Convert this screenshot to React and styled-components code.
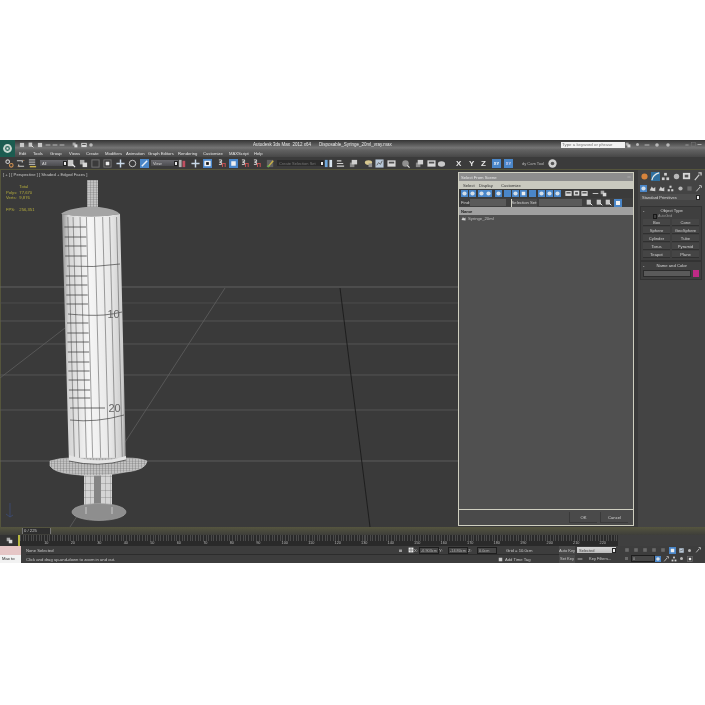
import React from 'react';
import styled, { createGlobalStyle } from 'styled-components';

const GlobalStyle = createGlobalStyle`
  html, body {
    margin: 0;
    background: #ffffff;
    font-family: "Liberation Sans", Arial, sans-serif;
  }
`;

const Frame = styled.div`
  margin-top: 140px;
  width: 705px;
  height: 423px;
  display: flex;
  flex-direction: column;
  overflow: hidden;
  background: #3f3f3f;
  filter: blur(0.4px);
`;

const Header = styled.div`
  height: 17px;
  flex: none;
  display: flex;
  background: linear-gradient(#353535 0, #757575 46%, #626262 58%, #474747 100%);
`;
const Logo = styled.div`
  width: 15px;
  flex: none;
  background: #1c5c50;
  display: flex;
  align-items: center;
  justify-content: center;
`;
const HeaderBody = styled.div`
  flex: 1;
  display: flex;
  flex-direction: column;
`;
const TitleRow = styled.div`
  height: 9px;
  display: flex;
  align-items: center;
  padding-left: 4px;
`;
const MenuRow = styled.div`
  height: 8px;
  display: flex;
  align-items: center;
  padding-left: 4px;
`;
const Slot = styled.div`
  width: ${(p) => p.$w}px;
  flex: none;
  display: flex;
  align-items: center;
  white-space: nowrap;
`;
const MenuItem = styled(Slot)`
  font-size: 4.2px;
  color: #e4e4e4;
`;
const TitleText = styled(Slot)`
  font-size: 4.5px;
  color: #e8e8e8;
`;
const SearchBox = styled.div`
  width: 64px;
  height: 6px;
  flex: none;
  background: #f2f2f2;
  color: #777777;
  font-size: 4.4px;
  line-height: 6px;
  padding-left: 1px;
  box-sizing: border-box;
`;

const Toolbar = styled.div`
  height: 13px;
  flex: none;
  display: flex;
  align-items: center;
  padding-left: 5px;
  background: #3b3b3b;
  border-bottom: 1px solid #55553c;
  box-sizing: border-box;
`;
const Combo = styled.div`
  width: ${(p) => p.$w}px;
  height: 6px;
  box-sizing: border-box;
  display: flex;
  align-items: center;
  justify-content: space-between;
  padding-left: 2px;
  font-size: 4px;
  white-space: nowrap;
  color: ${(p) => p.$text || '#d6d6d6'};
  background: ${(p) => p.$bg || 'linear-gradient(#6b6b70, #4c4c50)'};
`;
const ComboArrow = styled.span`
  width: 4px;
  height: 5px;
  flex: none;
  background: #e8e8e8;
  border: 1px solid #222222;
  box-sizing: border-box;
`;
const AxisKey = styled.span`
  font-size: 8px;
  font-weight: 700;
  color: #e8e8e8;
`;
const AxisPlane = styled.span`
  width: 9px;
  height: 9px;
  display: flex;
  align-items: center;
  justify-content: center;
  font-size: 4px;
  font-weight: 700;
  color: ${(p) => (p.$active ? '#ffffff' : '#d8d0f0')};
  background: #4a86c8;
`;
const ToolLabel = styled.span`
  font-size: 4px;
  color: #b8b8b8;
`;

const Workspace = styled.div`
  flex: 1;
  min-height: 0;
  display: flex;
`;
const Viewport = styled.div`
  position: relative;
  width: 638px;
  flex: none;
  background: #3a3a3a;
  box-shadow: inset 1px 0 0 #55553c;
`;
const Scene = styled.svg`
  display: block;
  width: 638px;
  height: 357px;
`;
const ViewLabel = styled.div`
  position: absolute;
  left: 3px;
  top: 2px;
  font-size: 4.2px;
  color: #c8c8c8;
`;
const Stats = styled.div`
  position: absolute;
  left: 6px;
  top: 14px;
  display: grid;
  grid-template-columns: 10px auto;
  column-gap: 1px;
  font-size: 4.2px;
  line-height: 5.5px;
  color: #b4ac3c;
`;
const StatGap = styled.div`
  grid-column: 1 / 3;
  height: 6px;
`;

const Dialog = styled.div`
  position: absolute;
  left: 458px;
  top: 2px;
  width: 176px;
  height: 354px;
  display: flex;
  flex-direction: column;
  box-sizing: border-box;
  border: 1px solid #cfcfc0;
  background: #4a4a4a;
`;
const DialogTitle = styled.div`
  height: 8px;
  flex: none;
  display: flex;
  align-items: center;
  justify-content: space-between;
  padding: 0 2px;
  font-size: 4.2px;
  color: #e8e8e8;
  background: #8d8d8d;
`;
const DialogMenu = styled.div`
  height: 8px;
  flex: none;
  display: flex;
  align-items: center;
  padding-left: 4px;
  font-size: 4.2px;
  color: #333333;
  background: #c9c9bf;
`;
const DialogTools = styled.div`
  height: 9px;
  flex: none;
  display: flex;
  align-items: center;
  padding-left: 2px;
  background: #3b3b3b;
`;
const FindRow = styled.div`
  height: 9px;
  flex: none;
  display: flex;
  align-items: center;
  padding-left: 2px;
  background: #3f3f3f;
  font-size: 4.2px;
  color: #d0d0d0;
`;
const FindInput = styled.div`
  width: ${(p) => p.$w}px;
  height: 7px;
  flex: none;
  background: #5a5a5a;
`;
const SetButton = styled.div`
  width: 26px;
  height: 8px;
  flex: none;
  margin: 0 2px 0 5px;
  display: flex;
  align-items: center;
  justify-content: center;
  white-space: nowrap;
  background: #4b4b4b;
  border-left: 1px solid #d4d4c8;
  box-sizing: border-box;
`;
const ListHeader = styled.div`
  height: 8px;
  flex: none;
  display: flex;
  align-items: center;
  padding-left: 2px;
  font-size: 4.2px;
  font-weight: 700;
  color: #222222;
  background: #a0a0a0;
`;
const ListBody = styled.div`
  flex: 1;
  background: #505050;
  padding: 1px 0 0 2px;
  border-bottom: 1px solid #cfcfc0;
`;
const ListRow = styled.div`
  display: flex;
  align-items: center;
  gap: 2px;
  height: 5px;
  font-size: 4.2px;
  color: #c0c0c0;
`;
const DialogFooter = styled.div`
  height: 15px;
  flex: none;
  display: flex;
  align-items: center;
  justify-content: flex-end;
  gap: 3px;
  padding-right: 5px;
  background: #4a4a4a;
`;
const FooterButton = styled.div`
  width: 27px;
  height: 10px;
  display: flex;
  align-items: center;
  justify-content: center;
  font-size: 4.2px;
  color: #d0d0d0;
  border-left: 1px solid #3a3a3a;
  border-bottom: 1px solid #3a3a3a;
`;

const CommandPanel = styled.div`
  flex: 1;
  display: flex;
  flex-direction: column;
  padding: 0 3px 0 2px;
  background: #444444;
  box-sizing: border-box;
`;
const PanelIcons = styled.div`
  height: 12px;
  display: flex;
  align-items: center;
  justify-content: space-between;
  flex: none;
`;
const Rollout = styled.div`
  margin-top: ${(p) => p.$top}px;
  flex: none;
  display: flex;
  flex-direction: column;
  padding: 1px 2px 2px;
  background: #3f3f3f;
  border: 1px solid #333333;
  box-sizing: border-box;
`;
const RolloutHead = styled.div`
  height: 5px;
  flex: none;
  display: flex;
  justify-content: space-between;
  font-size: 4.2px;
  line-height: 5px;
  color: #d4d4d4;
`;
const AutoGrid = styled.div`
  height: 6px;
  display: flex;
  align-items: center;
  padding-left: 10px;
  gap: 1px;
  font-size: 3.6px;
  color: #9a9a9a;
`;
const CheckBox = styled.span`
  width: 4px;
  height: 5px;
  border: 1px solid #181818;
  box-sizing: border-box;
`;
const ObjectGrid = styled.div`
  display: grid;
  grid-template-columns: 1fr 1fr;
  column-gap: 2px;
  row-gap: 1px;
`;
const ObjectButton = styled.div`
  height: 7px;
  box-sizing: border-box;
  display: flex;
  align-items: center;
  justify-content: center;
  font-size: 4.2px;
  color: #cccccc;
  background: #454545;
  border-bottom: 1px solid #303030;
`;
const NameRow = styled.div`
  display: flex;
  gap: 2px;
  margin-top: 2px;
`;
const NameInput = styled.div`
  flex: 1;
  height: 7px;
  background: #5a5a5a;
  border: 1px solid #2c2c2c;
  box-sizing: border-box;
`;
const Swatch = styled.div`
  width: 6px;
  height: 7px;
  background: #c02a86;
`;

const SliderBar = styled.div`
  height: 8px;
  flex: none;
  display: flex;
  align-items: center;
  padding-left: 3px;
  background: linear-gradient(#55553f, #3e3e3a);
  font-size: 4.2px;
  color: #c8c8c8;
`;
const SliderThumb = styled.div`
  width: 29px;
  height: 6px;
  margin-left: 19px;
  padding-left: 1px;
  line-height: 6px;
  background: #2f2f2f;
  border-right: 1px solid #777777;
  border-left: 1px solid #777777;
  box-sizing: border-box;
`;
const TrackRow = styled.div`
  height: 11px;
  flex: none;
  display: flex;
  background: #3f3f3f;
`;
const TrackKey = styled.div`
  width: 18px;
  flex: none;
  display: flex;
  align-items: center;
  justify-content: center;
  background: #333333;
`;
const TrackMark = styled.div`
  width: 2px;
  flex: none;
  background: #b8b840;
`;
const TrackScale = styled.div`
  width: 598px;
  flex: none;
  display: flex;
  padding-left: 13px;
  box-sizing: border-box;
  background:
    repeating-linear-gradient(90deg, #4a4a4a 0, #4a4a4a 1px, transparent 1px, transparent 2.65px) top / 100% 6px no-repeat,
    #2a2a2a;
`;
const TrackLabel = styled.div`
  width: 26.5px;
  flex: none;
  align-self: flex-end;
  text-align: center;
  font-size: 3.8px;
  line-height: 5px;
  color: #b4b4b4;
`;

const StatusBar = styled.div`
  height: 17px;
  flex: none;
  display: flex;
  background: #3d3d3d;
`;
const MiniListener = styled.div`
  width: 21px;
  flex: none;
  display: flex;
  flex-direction: column;
`;
const ListenerTop = styled.div`
  height: 9px;
  background: #e6c6c6;
`;
const ListenerBottom = styled.div`
  flex: 1;
  background: #f2f2f2;
  font-size: 4.2px;
  line-height: 8px;
  padding-left: 2px;
  color: #222222;
`;
const PromptArea = styled.div`
  width: 538px;
  flex: none;
  display: flex;
  flex-direction: column;
  padding-left: 5px;
  box-sizing: border-box;
`;
const PromptRow = styled.div`
  height: ${(p) => p.$h}px;
  display: flex;
  align-items: center;
  font-size: 4.2px;
  color: #c8c8c8;
  border-bottom: ${(p) => (p.$line ? '1px solid #2c2c2c' : 'none')};
  box-sizing: border-box;
`;
const CoordBox = styled.div`
  width: ${(p) => p.$w}px;
  height: 7px;
  flex: none;
  font-size: 3.8px;
  line-height: 6px;
  padding-left: 1px;
  color: #b0b0b0;
  background: #474747;
  border: 1px solid #1e1e1e;
  box-sizing: border-box;
`;
const AnimArea = styled.div`
  width: 60px;
  flex: none;
  display: flex;
  flex-direction: column;
`;
const AnimRow = styled.div`
  height: 9px;
  display: flex;
  align-items: center;
  font-size: 4px;
  color: #c8c8c8;
`;
const AnimButton = styled.div`
  width: 16px;
  height: 8px;
  flex: none;
  margin-right: 2px;
  display: flex;
  align-items: center;
  justify-content: center;
  white-space: nowrap;
  background: #4a4a4a;
`;
const NavArea = styled.div`
  flex: 1;
  display: flex;
  flex-direction: column;
  padding-left: 5px;
`;

const COLORS = {
  blue: '#4a86c8',
  yellow: '#c8b048',
  orange: '#d8843c',
};

const Icon = ({ kind, size = 8 }) => {
  const shapes = {
    link: (
      <>
        <circle cx="3" cy="3" r="2" fill="none" stroke="#c8c8c8" strokeWidth="1.2" />
        <circle cx="7" cy="7" r="2" fill="none" stroke="#d09050" strokeWidth="1.2" />
      </>
    ),
    unlink: (
      <>
        <path d="M1 2h6v2M9 8H3V6" fill="none" stroke="#c8c8c8" strokeWidth="1.2" />
        <path d="M2 8l1 1M8 1l1 1" stroke="#d09050" />
      </>
    ),
    layers: (
      <>
        <path d="M1 1h7M1 3.5h7M1 6h7" stroke="#a8a8a8" strokeWidth="1.4" />
        <path d="M2 8.5h7" stroke={COLORS.yellow} strokeWidth="1.6" />
      </>
    ),
    doc: (
      <>
        <rect x="1" y="1" width="6" height="7" fill="#c8c8c8" />
        <path d="M6 6l3 3" stroke="#eeeeee" strokeWidth="1.4" />
      </>
    ),
    docs: (
      <>
        <rect x="1" y="1" width="5" height="5" fill="#a8a8a8" />
        <rect x="4" y="4" width="5" height="5" fill="#d8d8d8" />
      </>
    ),
    rect: <rect x="1" y="1" width="8" height="8" fill="none" stroke="#777777" strokeWidth="1" />,
    win: (
      <>
        <rect x="1" y="1" width="8" height="8" fill="none" stroke="#777777" />
        <rect x="3" y="3" width="4" height="4" fill="#eeeeee" />
      </>
    ),
    move: <path d="M5 .5v9M.5 5h9" stroke="#c8d8e8" strokeWidth="1.6" />,
    rotate: <circle cx="5" cy="5" r="3.6" fill="none" stroke="#c8c8c8" strokeWidth="1.1" />,
    scale: (
      <>
        <rect width="10" height="10" fill={COLORS.blue} />
        <path d="M2 8l6-6" stroke="#e8f0f8" strokeWidth="1.6" />
      </>
    ),
    pivot: (
      <>
        <rect x="1" y="1" width="3" height="8" fill="#b0b0b0" />
        <rect x="5" y="2" width="3" height="7" fill="#c05060" />
      </>
    ),
    active: (
      <>
        <rect width="10" height="10" fill={COLORS.blue} />
        <rect x="2.5" y="2.5" width="5" height="5" fill="#f0f0f0" />
      </>
    ),
    play: (
      <>
        <rect width="10" height="10" fill={COLORS.blue} />
        <rect x="1.5" y="2" width="7" height="6" fill="#f0f0f0" />
        <rect x="3.5" y="3.5" width="3" height="3" fill="#111111" />
      </>
    ),
    solid: <rect width="10" height="10" fill={COLORS.blue} />,
    snap: (
      <>
        <path d="M1 1h3v2H2v1h2v2H1" fill="none" stroke="#e0e0e0" />
        <path d="M5 9V5h3v4" fill="none" stroke="#c05050" strokeWidth="1.2" />
      </>
    ),
    edit: (
      <>
        <rect x="1" y="1" width="7" height="8" fill="#606060" />
        <path d="M2 9l6-7" stroke={COLORS.yellow} strokeWidth="1.6" />
        <path d="M1 8h3" stroke="#58a858" strokeWidth="1.4" />
      </>
    ),
    mirror: (
      <>
        <rect x="1" y="1" width="3" height="8" fill="#6fa8dc" />
        <rect x="6" y="1" width="3" height="8" fill="#d8e4f0" />
      </>
    ),
    align: <path d="M1 2h5M1 5h7M1 8h8" stroke="#cfcfcf" strokeWidth="1.3" />,
    stack: (
      <>
        <rect x="1" y="4" width="5" height="5" fill="#888888" />
        <rect x="3" y="1" width="6" height="5" fill="#cfcfcf" />
      </>
    ),
    cloud: (
      <>
        <ellipse cx="5" cy="4" rx="4" ry="2.6" fill="#d8c890" />
        <rect x="5" y="5" width="4" height="4" fill="#909090" />
      </>
    ),
    grid: (
      <>
        <rect x="0.5" y="0.5" width="9" height="9" fill="#b8c8d8" />
        <path d="M2 7l2-3 2 2 2-4" stroke="#606060" fill="none" />
      </>
    ),
    panel: (
      <>
        <rect x="0.5" y="1.5" width="9" height="7" fill="#d8d8d8" />
        <rect x="2" y="3" width="6" height="2" fill="#505050" />
      </>
    ),
    render: (
      <>
        <circle cx="5" cy="5" r="3.6" fill="#909090" />
        <path d="M7 7l2.5 2.5" stroke="#e0e0e0" strokeWidth="1.3" />
      </>
    ),
    teapot: <ellipse cx="5" cy="5.5" rx="4" ry="3" fill="#c8c8c8" />,
    ball: (
      <>
        <circle cx="5" cy="5" r="4.6" fill="#d0d0d0" />
        <circle cx="5" cy="5" r="2" fill="#555555" />
      </>
    ),
    sun: <circle cx="5" cy="5" r="3.4" fill={COLORS.orange} />,
    curve: (
      <>
        <rect width="10" height="10" fill="#2f6f9f" />
        <path d="M1 9C2 4 5 2 9 1" stroke="#e8e8e8" fill="none" strokeWidth="1.3" />
      </>
    ),
    tree: (
      <>
        <rect x="3.5" y="1" width="3" height="3" fill="#cfcfcf" />
        <rect x="1" y="6" width="3" height="3" fill="#cfcfcf" />
        <rect x="6" y="6" width="3" height="3" fill="#cfcfcf" />
      </>
    ),
    monitor: (
      <>
        <rect x="1" y="1" width="8" height="7" fill="#d8d8d8" />
        <rect x="3" y="3" width="4" height="3" fill="#555555" />
      </>
    ),
    wrench: <path d="M2 9l5-6M6 1h3v3" stroke="#c8c8c8" fill="none" strokeWidth="1.4" />,
    geo: (
      <>
        <rect width="10" height="10" fill={COLORS.blue} />
        <circle cx="5" cy="5" r="3" fill="#d4dee8" />
      </>
    ),
    shape: <path d="M1 8l3-6 2 3 3-2v6z" fill="#cfcfcf" />,
    dot: <circle cx="5" cy="5" r="3" fill="#b8b8b8" />,
    dim: <rect x="2" y="2" width="6" height="6" fill="#6a6a6a" />,
    key: (
      <>
        <rect x="1" y="1" width="8" height="8" fill="#eeeeee" />
        <path d="M1 5h8M5 1v8" stroke="#555555" />
      </>
    ),
    lock: <rect x="2" y="3" width="6" height="5" fill="#9a9a9a" />,
    quick: <rect x="1.5" y="1.5" width="7" height="7" fill="#c8c8c8" />,
    dash: <path d="M1 5h8" stroke="#c8c8c8" strokeWidth="1.4" />,
  };
  return (
    <svg width={size} height={size} viewBox="0 0 10 10">
      {shapes[kind]}
    </svg>
  );
};

// each entry: x on the page, next entry's x gives the slot width
const toSlots = (list, end) =>
  list.map((item, i) => ({
    ...item,
    w: (i + 1 < list.length ? list[i + 1].x : end) - item.x,
  }));

const QUICK = [
  { x: 19, kind: 'quick' },
  { x: 28, kind: 'doc' },
  { x: 37, kind: 'quick' },
  { x: 45, kind: 'dash' },
  { x: 52, kind: 'dash' },
  { x: 59, kind: 'dash' },
  { x: 72, kind: 'docs' },
  { x: 81, kind: 'panel' },
  { x: 88, kind: 'dot' },
];

const MENUS = [
  ['Edit', 19],
  ['Tools', 33],
  ['Group', 50],
  ['Views', 69],
  ['Create', 86],
  ['Modifiers', 105],
  ['Animation', 126],
  ['Graph Editors', 148],
  ['Rendering', 178],
  ['Customize', 203],
  ['MAXScript', 229],
  ['Help', 254],
];

const MAIN_TOOLS = [
  { x: 5, kind: 'link' },
  { x: 16, kind: 'unlink' },
  { x: 28, kind: 'layers' },
  { x: 40, combo: 'All', w: 25 },
  { x: 67, kind: 'doc' },
  { x: 79, kind: 'docs' },
  { x: 91, kind: 'rect' },
  { x: 103, kind: 'win' },
  { x: 116, kind: 'move' },
  { x: 128, kind: 'rotate' },
  { x: 140, kind: 'scale' },
  { x: 151, combo: 'View', w: 25 },
  { x: 178, kind: 'pivot' },
  { x: 191, kind: 'move' },
  { x: 203, kind: 'play' },
  { x: 218, kind: 'snap' },
  { x: 229, kind: 'active' },
  { x: 241, kind: 'snap' },
  { x: 253, kind: 'snap' },
  { x: 266, kind: 'edit' },
  { x: 277, combo: 'Create Selection Set', w: 43, dark: true },
  { x: 324, kind: 'mirror' },
  { x: 336, kind: 'align' },
  { x: 349, kind: 'stack' },
  { x: 364, kind: 'cloud' },
  { x: 375, kind: 'grid' },
  { x: 387, kind: 'panel' },
  { x: 401, kind: 'render' },
  { x: 415, kind: 'stack' },
  { x: 427, kind: 'panel' },
  { x: 437, kind: 'teapot' },
  { x: 456, axis: 'X' },
  { x: 469, axis: 'Y' },
  { x: 481, axis: 'Z' },
  { x: 492, plane: 'XY', active: true },
  { x: 504, plane: 'XY' },
  { x: 522, label: 'dy Cam Tool' },
  { x: 548, kind: 'ball', size: 9 },
];

const DIALOG_TOOLS = [
  { x: 460, kind: 'geo' },
  { x: 468, kind: 'geo' },
  { x: 477, kind: 'geo' },
  { x: 484, kind: 'geo' },
  { x: 494, kind: 'geo' },
  { x: 503, kind: 'solid' },
  { x: 511, kind: 'geo' },
  { x: 519, kind: 'active' },
  { x: 528, kind: 'solid' },
  { x: 537, kind: 'geo' },
  { x: 545, kind: 'geo' },
  { x: 553, kind: 'geo' },
  { x: 564, kind: 'panel' },
  { x: 572, kind: 'monitor' },
  { x: 580, kind: 'panel' },
  { x: 591, kind: 'dash' },
  { x: 599, kind: 'docs' },
];

const OBJECTS = ['Box', 'Cone', 'Sphere', 'GeoSphere', 'Cylinder', 'Tube', 'Torus', 'Pyramid', 'Teapot', 'Plane'];
const TICKS = [227, 237, 246, 256, 276, 285, 295, 304, 323, 333, 342, 352, 362, 371, 380, 390, 398];
const MERIDIANS = [0.1, 0.19, 0.31, 0.42, 0.56, 0.7, 0.82, 0.94];
const GROUND = [
  [287, '#6a6a6a'],
  [303, '#525252'],
  [321, '#5c5c5c'],
  [344, '#5c5c5c'],
  [375, '#5c5c5c'],
  [410, '#5c5c5c'],
  [461, '#666666'],
];

const leftEdge = (y) => 62 + (y - 214) * 0.0277;

const Syringe = () => (
  <g>
    {/* nozzle */}
    <rect x="87" y="180" width="11" height="28" fill="url(#mesh)" />
    {/* shoulder */}
    <path d="M61 214Q66 209 86 207H99Q116 209 120 214Q91 219 61 214Z" fill="#a4a4a4" />
    {/* barrel */}
    <path d="M62 214Q91 219 120 214L126 464Q97 472 69 464Z" fill="url(#barrel)" />
    {MERIDIANS.map((f) => (
      <line
        key={f}
        x1={leftEdge(216) + f * 58}
        y1="217"
        x2={leftEdge(466) + f * 57}
        y2="468"
        stroke="#555555"
        strokeWidth="0.55"
      />
    ))}
    {TICKS.map((y) => (
      <line key={y} x1={leftEdge(y) + 2} y1={y} x2={86 + (y - 227) * 0.025} y2={y} stroke="#444444" strokeWidth="0.8" />
    ))}
    <path d="M67 266Q93 268 120 264" fill="none" stroke="#444444" strokeWidth="0.7" />
    <path d="M68 314Q90 316 104 315Q114 314 122 312" fill="none" stroke="#444444" strokeWidth="0.7" />
    <path d="M70 408H105" stroke="#444444" strokeWidth="0.8" />
    <path d="M70 420Q96 423 124 415" fill="none" stroke="#444444" strokeWidth="0.7" />
    <text x="107.5" y="318" fontFamily="Liberation Sans" fontSize="11" fill="#666666">10</text>
    <text x="108.5" y="412" fontFamily="Liberation Sans" fontSize="11" fill="#666666">20</text>
    {/* stem and plunger */}
    <rect x="84" y="472" width="28" height="36" fill="url(#stem)" />
    <rect x="94" y="474" width="7" height="38" fill="#848484" />
    <ellipse cx="99" cy="512" rx="27" ry="8.5" fill="#8e8e8e" stroke="#a8a8a8" strokeWidth="0.6" />
    <path d="M86 507v7M112 507v7" stroke="#c8c8c8" strokeWidth="1" />
    {/* finger flange */}
    <path d="M50 461Q60 458 69 458L126 458Q140 458 147 461Q146 470 126 472Q98 478 70 474Q54 472 50 466Z" fill="url(#mesh)" stroke="#d0d0d0" strokeWidth="0.6" />
    <path d="M69 455Q97 465 126 456L126 460Q98 468 69 461Z" fill="#e4e4e4" />
    <path d="M69 461Q98 468 126 460" fill="none" stroke="#333333" strokeWidth="0.7" />
  </g>
);

const App = () => (
  <>
    <GlobalStyle />
    <Frame>
      <Header>
        <Logo>
          <svg width="11" height="11" viewBox="0 0 11 11">
            <circle cx="5.5" cy="5.5" r="4.4" fill="#c8d8d0" />
            <circle cx="5.5" cy="5.5" r="2.4" fill="#2b6a5c" />
            <path d="M4.5 4.5h2v2h-2z" fill="#e8e8e8" />
          </svg>
        </Logo>
        <HeaderBody>
          <TitleRow>
            {toSlots(QUICK, 253).map((q) => (
              <Slot key={q.x} $w={q.w}>
                <Icon kind={q.kind} size={6} />
              </Slot>
            ))}
            <TitleText $w={66}>Autodesk 3ds Max&nbsp; 2012 x64</TitleText>
            <TitleText $w={242}>Disposable_Syringe_20ml_vray.max</TitleText>
            <SearchBox>Type a keyword or phrase</SearchBox>
            <Slot $w={10}><Icon kind="docs" size={6} /></Slot>
            <Slot $w={9}><Icon kind="dot" size={5} /></Slot>
            <Slot $w={10}><Icon kind="dash" size={6} /></Slot>
            <Slot $w={11}><Icon kind="dot" size={6} /></Slot>
            <Slot $w={20}><Icon kind="dot" size={6} /></Slot>
            <Slot $w={6}><Icon kind="dash" size={4} /></Slot>
            <Slot $w={6}><Icon kind="rect" size={5} /></Slot>
            <Slot $w={5}><Icon kind="dash" size={5} /></Slot>
          </TitleRow>
          <MenuRow>
            {MENUS.map(([name, x], i) => (
              <MenuItem key={name} $w={(MENUS[i + 1] ? MENUS[i + 1][1] : x + 12) - x}>
                {name}
              </MenuItem>
            ))}
          </MenuRow>
        </HeaderBody>
      </Header>

      <Toolbar>
        {toSlots(MAIN_TOOLS, 560).map((t) => (
          <Slot key={t.x} $w={t.w}>
            {t.kind && <Icon kind={t.kind} size={t.size || 9} />}
            {t.combo && (
              <Combo $w={t.w} $bg={t.dark ? '#2c2c2c' : undefined} $text={t.dark ? '#777777' : undefined}>
                {t.combo}
                <ComboArrow />
              </Combo>
            )}
            {t.axis && <AxisKey>{t.axis}</AxisKey>}
            {t.plane && <AxisPlane $active={t.active}>{t.plane}</AxisPlane>}
            {t.label && <ToolLabel>{t.label}</ToolLabel>}
          </Slot>
        ))}
      </Toolbar>

      <Workspace>
        <Viewport>
          <Scene viewBox="0 170 638 357">
            <defs>
              <linearGradient id="barrel" x1="0" x2="1" y1="0" y2="0">
                <stop offset="0" stopColor="#8f8f8f" />
                <stop offset="0.1" stopColor="#d4d4d4" />
                <stop offset="0.42" stopColor="#f6f6f6" />
                <stop offset="0.75" stopColor="#e8e8e8" />
                <stop offset="0.95" stopColor="#cccccc" />
                <stop offset="1" stopColor="#8a8a8a" />
              </linearGradient>
              <pattern id="mesh" width="3" height="2.4" patternUnits="userSpaceOnUse">
                <rect width="3" height="2.4" fill="#c4c4c4" />
                <path d="M0 0H3M0 0V2.4" stroke="#6a6a6a" strokeWidth="0.6" />
              </pattern>
              <pattern id="stem" width="5" height="7" patternUnits="userSpaceOnUse">
                <rect width="5" height="7" fill="#d4d4d4" />
                <path d="M0 0H5M0 0V7" stroke="#666666" strokeWidth="0.6" />
              </pattern>
            </defs>
            {GROUND.map(([y, color]) => (
              <line key={y} x1="0" y1={y} x2="458" y2={y} stroke={color} strokeWidth="0.8" />
            ))}
            <line x1="225" y1="288" x2="70" y2="527" stroke="#606060" strokeWidth="0.8" />
            <line x1="0" y1="378" x2="65" y2="328" stroke="#606060" strokeWidth="0.8" />
            <line x1="340" y1="288" x2="370" y2="527" stroke="#1e1e1e" strokeWidth="1" />
            <Syringe />
            <path d="M10 503v14M6 514l4 3 3-2" fill="none" stroke="#3c4c78" strokeWidth="0.8" />
          </Scene>
          <ViewLabel>[ + ] [ Perspective ] [ Shaded + Edged Faces ]</ViewLabel>
          <Stats>
            <span />
            <span>&nbsp;&nbsp;Total</span>
            <span>Polys:</span>
            <span>&nbsp;&nbsp;77,670</span>
            <span>Verts:</span>
            <span>&nbsp;&nbsp;9,876</span>
            <StatGap />
            <span>FPS:</span>
            <span>&nbsp;&nbsp;256,351</span>
          </Stats>
          <Dialog>
            <DialogTitle>
              <span>Select From Scene</span>
              <Icon kind="dash" size={4} />
            </DialogTitle>
            <DialogMenu>
              <Slot $w={16}>Select</Slot>
              <Slot $w={22}>Display</Slot>
              <Slot $w={30}>Customize</Slot>
            </DialogMenu>
            <DialogTools>
              {toSlots(DIALOG_TOOLS, 612).map((t) => (
                <Slot key={t.x} $w={t.w}>
                  <Icon kind={t.kind} size={7} />
                </Slot>
              ))}
            </DialogTools>
            <FindRow>
              <Slot $w={9}>Find:</Slot>
              <FindInput $w={36} />
              <SetButton>Selection Set:</SetButton>
              <FindInput $w={43} />
              <Slot $w={4} />
              <Slot $w={10}><Icon kind="doc" size={7} /></Slot>
              <Slot $w={9}><Icon kind="doc" size={7} /></Slot>
              <Slot $w={9}><Icon kind="doc" size={7} /></Slot>
              <Icon kind="active" size={8} />
            </FindRow>
            <ListHeader>Name</ListHeader>
            <ListBody>
              <ListRow>
                <Icon kind="shape" size={5} />
                Syringe_20ml
              </ListRow>
            </ListBody>
            <DialogFooter>
              <FooterButton>OK</FooterButton>
              <FooterButton>Cancel</FooterButton>
            </DialogFooter>
          </Dialog>
        </Viewport>

        <CommandPanel>
          <PanelIcons>
            {['sun', 'curve', 'tree', 'dot', 'monitor', 'wrench'].map((k) => (
              <Icon key={k} kind={k} size={9} />
            ))}
          </PanelIcons>
          <PanelIcons>
            {['geo', 'shape', 'shape', 'tree', 'dot', 'dim', 'wrench'].map((k, i) => (
              <Icon key={i} kind={k} size={7} />
            ))}
          </PanelIcons>
          <Combo $w={60} $bg="#4e4e4e">
            Standard Primitives
            <ComboArrow />
          </Combo>
          <Rollout $top={6}>
            <RolloutHead>
              <span>-</span>
              <span>Object Type</span>
              <span />
            </RolloutHead>
            <AutoGrid>
              <CheckBox />
              AutoGrid
            </AutoGrid>
            <ObjectGrid>
              {OBJECTS.map((o) => (
                <ObjectButton key={o}>{o}</ObjectButton>
              ))}
            </ObjectGrid>
          </Rollout>
          <Rollout $top={0}>
            <RolloutHead>
              <span>-</span>
              <span>Name and Color</span>
              <span />
            </RolloutHead>
            <NameRow>
              <NameInput />
              <Swatch />
            </NameRow>
          </Rollout>
        </CommandPanel>
      </Workspace>

      <SliderBar>
        <SliderThumb>0 / 225</SliderThumb>
      </SliderBar>
      <TrackRow>
        <TrackKey>
          <Icon kind="docs" size={7} />
        </TrackKey>
        <TrackMark />
        <TrackScale>
          {Array.from({ length: 22 }, (_, i) => (
            <TrackLabel key={i}>{(i + 1) * 10}</TrackLabel>
          ))}
        </TrackScale>
      </TrackRow>

      <StatusBar>
        <MiniListener>
          <ListenerTop />
          <ListenerBottom>Max to</ListenerBottom>
        </MiniListener>
        <PromptArea>
          <PromptRow $h={9} $line>
            <Slot $w={372}>None Selected</Slot>
            <Slot $w={10}><Icon kind="lock" size={5} /></Slot>
            <Slot $w={6}><Icon kind="key" size={6} /></Slot>
            <Slot $w={5}>X:</Slot>
            <CoordBox $w={20}>-6.903cm</CoordBox>
            <Slot $w={9}>Y:</Slot>
            <CoordBox $w={20}>-14.80cm</CoordBox>
            <Slot $w={9}>Z:</Slot>
            <CoordBox $w={20}>0.0cm</CoordBox>
            <Slot $w={9} />
            <Slot $w={30}>Grid = 10.0cm</Slot>
          </PromptRow>
          <PromptRow $h={8}>
            <Slot $w={472}>Click and drag up-and-down to zoom in and out.</Slot>
            <Slot $w={7}><Icon kind="quick" size={5} /></Slot>
            <Slot $w={30}>Add Time Tag</Slot>
          </PromptRow>
        </PromptArea>
        <AnimArea>
          <AnimRow>
            <AnimButton>Auto Key</AnimButton>
            <Combo $w={39} $bg="linear-gradient(#d8d8d8,#bcbcbc)" $text="#444444">
              Selected
              <ComboArrow />
            </Combo>
          </AnimRow>
          <AnimRow>
            <AnimButton>Set Key</AnimButton>
            <Slot $w={12}><Icon kind="dash" size={6} /></Slot>
            Key Filters...
          </AnimRow>
        </AnimArea>
        <NavArea>
          <AnimRow>
            {['dim', 'dim', 'dim', 'dim', 'dim'].map((k, i) => (
              <Slot key={i} $w={9}>
                <Icon kind={k} size={6} />
              </Slot>
            ))}
            <Slot $w={10}><Icon kind="active" size={7} /></Slot>
            <Slot $w={8}><Icon kind="grid" size={5} /></Slot>
            <Slot $w={8}><Icon kind="dot" size={5} /></Slot>
            <Slot $w={8}><Icon kind="wrench" size={6} /></Slot>
          </AnimRow>
          <AnimRow>
            <Slot $w={7}><Icon kind="dim" size={5} /></Slot>
            <CoordBox $w={24}>0</CoordBox>
            <Slot $w={8}><Icon kind="geo" size={6} /></Slot>
            <Slot $w={8}><Icon kind="wrench" size={6} /></Slot>
            <Slot $w={8}><Icon kind="tree" size={6} /></Slot>
            <Slot $w={8}><Icon kind="dot" size={5} /></Slot>
            <Slot $w={7}><Icon kind="win" size={6} /></Slot>
          </AnimRow>
        </NavArea>
      </StatusBar>
    </Frame>
  </>
);

export default App;
